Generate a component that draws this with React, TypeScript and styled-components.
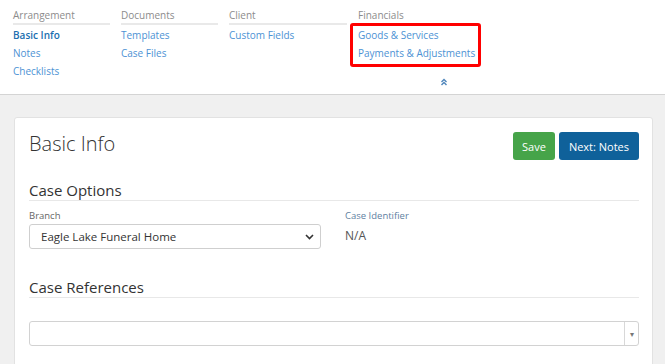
import React from 'react';
import styled, { createGlobalStyle } from 'styled-components';

const GlobalStyle = createGlobalStyle`
  body {
    margin: 0;
    background: #f0f0f0;
    font-family: "Open Sans", "Liberation Sans", sans-serif;
    overflow: hidden;
  }
`;

const navGroups = [
  { title: 'Arrangement', width: 97, links: ['Basic Info', 'Notes', 'Checklists'], active: 'Basic Info' },
  { title: 'Documents', width: 97, links: ['Templates', 'Case Files'] },
  { title: 'Client', width: 118, links: ['Custom Fields'] },
];

const App = () => {
  return (
    <>
      <GlobalStyle />
      <TopNav>
        <NavColumns>
          {navGroups.map((g) => (
            <NavGroup key={g.title} $width={g.width}>
              <GroupTitle>{g.title}</GroupTitle>
              <LinkList>
                {g.links.map((l) => (
                  <NavLink key={l} $active={l === g.active}>{l}</NavLink>
                ))}
              </LinkList>
            </NavGroup>
          ))}
          <NavGroup $width={118}>
            <GroupTitle>Financials</GroupTitle>
            <Highlight>
              <NavLink>Goods &amp; Services</NavLink>
              <NavLink>Payments &amp; Adjustments</NavLink>
            </Highlight>
          </NavGroup>
        </NavColumns>
        <CollapseToggle>
          <svg width="8" height="8" viewBox="0 0 8 8" fill="none" stroke="#4f86bb" strokeWidth="1.4">
            <path d="M1.5 4 L4 1.5 L6.5 4" />
            <path d="M1.5 7 L4 4.5 L6.5 7" />
          </svg>
        </CollapseToggle>
      </TopNav>

      <Main>
        <Card>
          <CardHeader>
            <PageTitle>Basic Info</PageTitle>
            <Buttons>
              <Button $variant="save">Save</Button>
              <Button $variant="next">Next: Notes</Button>
            </Buttons>
          </CardHeader>

          <SectionTitle>Case Options</SectionTitle>
          <FieldRow>
            <Field $width={292}>
              <FieldLabel>Branch</FieldLabel>
              <SelectBox>
                <span>Eagle Lake Funeral Home</span>
                <svg width="9" height="6" viewBox="0 0 9 6" fill="none" stroke="#333" strokeWidth="1.6">
                  <path d="M1 1 L4.5 4.5 L8 1" />
                </svg>
              </SelectBox>
            </Field>
            <Field>
              <FieldLabel $blue>Case Identifier</FieldLabel>
              <StaticValue>N/A</StaticValue>
            </Field>
          </FieldRow>

          <SectionTitle $spaced>Case References</SectionTitle>
          <Combo>
            <ComboInput />
            <ComboArrow>▾</ComboArrow>
          </Combo>
        </Card>
      </Main>
    </>
  );
};

const TopNav = styled.header`
  background: #fff;
  height: 95px;
  border-bottom: 1px solid #d4d4d4;
  padding: 8px 13px 0;
  box-sizing: border-box;
`;

const NavColumns = styled.div`
  display: flex;
  gap: 11px;
`;

const NavGroup = styled.div<{ $width: number }>`
  width: ${(p) => p.$width}px;
  flex-shrink: 0;
`;

const GroupTitle = styled.div`
  font-size: 10px;
  line-height: 14px;
  color: #8c8c8c;
  padding-bottom: 1px;
  border-bottom: 2px solid #e9e9e9;
`;

const LinkList = styled.div`
  padding-top: 1px;
`;

const NavLink = styled.a<{ $active?: boolean }>`
  display: block;
  font-size: 10px;
  line-height: 18px;
  white-space: nowrap;
  color: ${(p) => (p.$active ? '#1b6fb0' : '#4d92d4')};
  font-weight: ${(p) => (p.$active ? 600 : 400)};
  cursor: pointer;
`;

const Highlight = styled.div`
  position: relative;
  width: 120px;
  margin: -2px 0 0 -8px;
  padding: 0 0 2px 5px;
  border: 3px solid #ff0000;
  border-radius: 3px;
  background: #fff;
`;

const CollapseToggle = styled.div`
  display: flex;
  margin: -2px 0 0 427px;
`;

const Main = styled.main`
  padding: 22px 12px 0 14px;
`;

const Card = styled.section`
  background: #fff;
  border: 1px solid #e2e2e2;
  border-radius: 3px;
  padding: 14px 13px 40px 14px;
  min-height: 300px;
`;

const CardHeader = styled.div`
  display: flex;
  justify-content: space-between;
  align-items: flex-start;
  margin-bottom: 20px;
`;

const PageTitle = styled.h1`
  margin: 0;
  font-size: 20px;
  font-weight: 300;
  color: #333;
  line-height: 23px;
`;

const Buttons = styled.div`
  display: flex;
  gap: 4px;
`;

const Button = styled.button<{ $variant: 'save' | 'next' }>`
  height: 28px;
  border: none;
  border-radius: 3px;
  padding: 0 ${(p) => (p.$variant === 'save' ? '9px' : '10px')};
  font-family: inherit;
  font-size: 11px;
  color: #fff;
  background: ${(p) => (p.$variant === 'save' ? '#46a449' : '#0f619a')};
  cursor: pointer;
`;

const SectionTitle = styled.h2<{ $spaced?: boolean }>`
  margin: ${(p) => (p.$spaced ? '28px' : '0')} 0 0;
  font-size: 15px;
  font-weight: 400;
  line-height: 20px;
  color: #333;
  border-bottom: 1px solid #e8e8e8;
`;

const FieldRow = styled.div`
  display: flex;
  gap: 24px;
  margin-top: 8px;
`;

const Field = styled.div<{ $width?: number }>`
  width: ${(p) => (p.$width ? `${p.$width}px` : 'auto')};
`;

const FieldLabel = styled.div<{ $blue?: boolean }>`
  font-size: 9.5px;
  line-height: 14px;
  color: ${(p) => (p.$blue ? '#5f7f9f' : '#666')};
  margin-bottom: 1px;
`;

const SelectBox = styled.div`
  display: flex;
  align-items: center;
  justify-content: space-between;
  height: 25px;
  box-sizing: border-box;
  border: 1px solid #cfcfcf;
  border-radius: 3px;
  padding: 0 6px 0 11px;
  font-size: 11.5px;
  color: #333;
`;

const StaticValue = styled.div`
  font-size: 12px;
  line-height: 16px;
  color: #555;
  margin-top: 5px;
`;

const Combo = styled.div`
  display: flex;
  height: 25px;
  margin-top: 23px;
  box-sizing: border-box;
  border: 1px solid #d2d2d2;
  border-radius: 3px;
`;

const ComboInput = styled.div`
  flex: 1;
`;

const ComboArrow = styled.div`
  width: 13px;
  border-left: 1px solid #d8d8d8;
  display: flex;
  align-items: center;
  justify-content: center;
  font-size: 8px;
  color: #777;
`;

export default App;
